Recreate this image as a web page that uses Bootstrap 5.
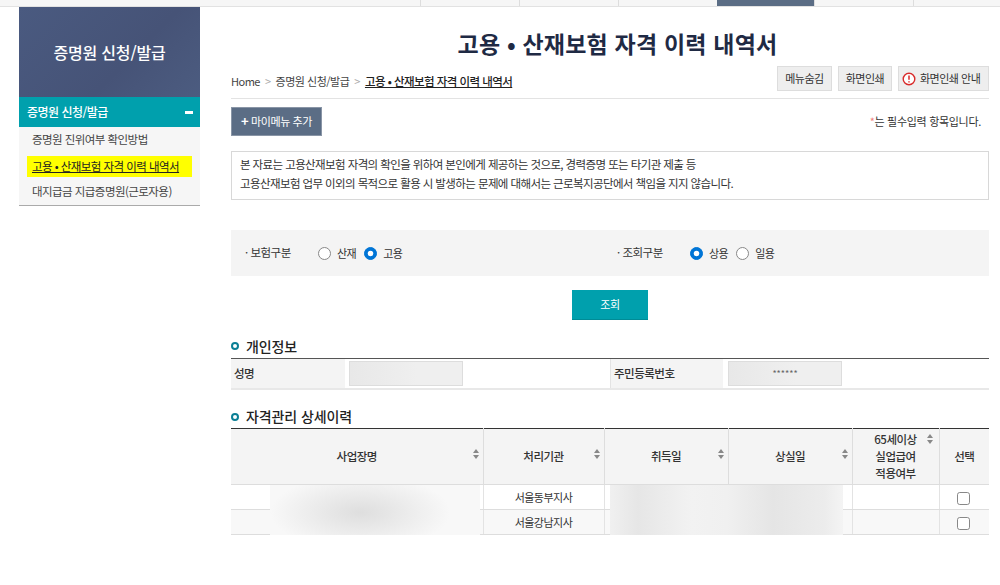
<!doctype html>
<html lang="ko"><head><meta charset="utf-8">
<link href="https://cdn.jsdelivr.net/npm/bootstrap@5.3.0/dist/css/bootstrap.min.css" rel="stylesheet">
<style>
html,body{height:585px;overflow:hidden;background:#fff}
body{font-family:"Noto Sans CJK KR","Liberation Sans",sans-serif;font-size:11px;color:#333;letter-spacing:-.5px}
.topbar{height:7px;background:#f6f6f6;border-bottom:1px solid #e2e2e2}
.topcell{width:99px;height:6px;border-left:1px solid #ddd}
.topdark{background:#5b6d85;border-left:0;width:97px}
.toplast{width:87px}
.shell{padding-left:19px;padding-right:11px;gap:31px}
.side{width:181px;flex:none}
.sidehead{height:90px;background:linear-gradient(135deg,#4a5a80,#465377 60%,#4c5c80);color:#fff;font-size:16px;font-weight:500;letter-spacing:-.2px}
.sideact{height:30px;background:#00a0ad;color:#fff;font-size:12px;font-weight:500;padding:0 7px 0 8px}
.sideminus{width:8px;height:3px;background:#fff}
.sidelist{background:#f6f6f6;border-bottom:1px solid #aaa;height:79px;padding:0 8px;font-size:11.5px;color:#444;letter-spacing:-.55px}
.sideitem{height:25px;padding-left:5px}
.sideon{background:#ff0;height:21px;margin:4px 0 2px;text-decoration:underline;color:#222}
.maincol{width:758px;flex:none}
.pagetitle{font-size:23px;font-weight:700;color:#1f2a44;height:43px;margin:21px 0 0;padding-left:15px;letter-spacing:.2px;text-align:center;line-height:30px}
.crumbbar{height:28px;border-bottom:1px solid #e3e3e3;padding-bottom:7px;font-size:11px;color:#444}
.crumbtext{margin-bottom:1px}
.crumbbar b{font-weight:500;font-size:11.5px;text-decoration:underline;color:#222;letter-spacing:-.55px}
.crumbsep{color:#aaa;margin:0 5px}
.toolset{gap:6px}
.toolbtn{background:#eee;border:1px solid #ddd;height:25px;font-size:11px;color:#333;padding:0;width:55px;letter-spacing:-.5px;border-radius:0}
.toolbtn:hover{background:#eee}
.toolmid{width:54px}
.toolinfo{width:91px;padding-left:3px;gap:4px}
.addbtn{background:#5b6d85;border:1px solid #8995a6;border-radius:0;color:#fff;height:29px;width:91px;font-size:11px;padding:0;letter-spacing:-.4px}
.addbtn b{font-size:13px;line-height:1}
.reqnote{font-size:11px;color:#333;letter-spacing:-.3px}
.reqmark{color:#f08080}
.notice{border:1px solid #d8d8d8;height:49px;padding:0 8px 3px;margin-top:15px;font-size:11.5px;line-height:19px;color:#333;letter-spacing:-.6px}
.searchpanel{background:#f4f4f4;height:46px;margin-top:30px;padding:0 14px;font-size:11px}
.searchhalf{width:372px}
.searchlabel{width:73px;font-size:11.5px}
.radioitem{gap:6px}
.radioitem .form-check-input{width:13px;height:13px;margin:0;background-color:#fff;border-color:#888}
.radioitem .form-check-input:checked{background-color:#0075d6;border-color:#0075d6}
.gobox{margin-top:14px}
.gobtn{width:76px;height:30px;background:#00a0ad;border:0;border-bottom:1px solid #008b96;border-radius:0;color:#fff;font-size:11px;padding:0;letter-spacing:-.4px}
.sectitle{font-size:14px;font-weight:500;color:#222;gap:7px;letter-spacing:-.1px}
.secfirst{margin-top:14px;height:24px}
.secnext{margin-top:15px;height:23px}
.secdot{width:8px;height:8px;border:2px solid #0b7f95;border-radius:50%;flex:none}
.infogrid{border-top:1px solid #555;border-bottom:2px solid #e8e8e8;height:32px}
.infolabel{background:#f4f4f4;font-size:11.5px;font-weight:500;color:#333;padding:0 3px;height:100%}
.labelone{width:114px}
.labeltwo{width:113px;border-left:1px solid #e3e3e3}
.valuecellone{width:265px;padding-left:4px}
.valuecelltwo{padding-left:5px}
.infovalue{background:linear-gradient(90deg,#e8e8e8,#efefef 60%);border:1px solid #ddd;height:25px;width:114px;font-size:9px;color:#666;letter-spacing:0}
.wrapblur{position:relative}
.histtable{width:758px;table-layout:fixed;margin:0;border-top:1px solid #333;font-size:11px;color:#333}
.histtable th{background:#f4f4f4;border-right:1px solid #ddd;border-bottom:1px solid #ddd;text-align:center;vertical-align:middle;font-size:11.5px;font-weight:500;height:56px;padding:0;position:relative;line-height:17px}
.histtable td{height:25px;padding:0;text-align:center;vertical-align:middle;border-bottom:1px solid #ddd;border-right:1px solid #e3e3e3}
.histtable tr:nth-child(2) td{background:#f8f8f8}
.histtable th:last-child,.histtable td:last-child{border-right:0}
.colname{width:252px}.colorg{width:121px}.coldate{width:124px}.colage{width:87px}.colpick{width:50px}
.sortmark{position:absolute;right:4px;top:20px;width:6px;height:10px}
.sorthigh{top:5px;right:6px}
.chk{width:13px;height:13px;margin:0 2px 0 0;border-color:#888;border-radius:2px;vertical-align:middle}
.blurbox{position:absolute}
.blurone{left:39px;top:57px;width:210px;height:50px;background:radial-gradient(ellipse 90px 38px at 43% 55%,#dedede,#f8f8f8)}
.blurtwo{left:379px;top:57px;width:233px;height:50px;background:linear-gradient(90deg,#f0f0f0,#e6e6e6 12%,#f2f2f2 35%,#f0f0f0 50%,#e5e5e5 70%,#ececec 92%,#f4f4f4)}
</style></head>
<body>
<div class="topbar d-flex"><div class="topcell ms-auto"></div><div class="topcell"></div><div class="topcell"></div><div class="topcell topdark"></div><div class="topcell"></div><div class="topcell toplast"></div></div>
<div class="d-flex shell">
 <aside class="side">
  <div class="sidehead d-flex align-items-center justify-content-center">증명원 신청/발급</div>
  <div class="sideact d-flex align-items-center justify-content-between"><span>증명원 신청/발급</span><span class="sideminus"></span></div>
  <div class="sidelist">
   <div class="sideitem d-flex align-items-center">증명원 진위여부 확인방법</div>
   <div class="sideitem sideon d-flex align-items-center">고용 • 산재보험 자격 이력 내역서</div>
   <div class="sideitem d-flex align-items-center">대지급금 지급증명원(근로자용)</div>
  </div>
 </aside>
 <main class="maincol">
  <h1 class="pagetitle">고용 • 산재보험 자격 이력 내역서</h1>
  <div class="crumbbar d-flex align-items-end justify-content-between">
   <div class="crumbtext">Home<span class="crumbsep">&gt;</span>증명원 신청/발급<span class="crumbsep">&gt;</span><b>고용 • 산재보험 자격 이력 내역서</b></div>
   <div class="d-flex toolset">
    <button class="btn toolbtn">메뉴숨김</button><button class="btn toolbtn toolmid">화면인쇄</button>
    <button class="btn toolbtn toolinfo d-flex align-items-center"><svg width="14" height="14" viewBox="0 0 14 14"><circle cx="7" cy="7" r="5.8" fill="#fff" stroke="#d92b2b" stroke-width="1.4"/><path d="M7 3.5v4.2M7 9.2v1.4" stroke="#d92b2b" stroke-width="1.5"/></svg>화면인쇄 안내</button>
   </div>
  </div>
  <div class="d-flex justify-content-between align-items-center mt-2">
   <button class="btn addbtn"><b>+</b> 마이메뉴 추가</button>
   <div class="reqnote me-2"><span class="reqmark">*</span>는 필수입력 항목입니다.</div>
  </div>
  <div class="notice d-flex align-items-center"><div>본 자료는 고용산재보험 자격의 확인을 위하여 본인에게 제공하는 것으로, 경력증명 또는 타기관 제출 등<br>고용산재보험 업무 이외의 목적으로 활용 시 발생하는 문제에 대해서는 근로복지공단에서 책임을 지지 않습니다.</div></div>
  <div class="searchpanel d-flex align-items-center">
   <div class="searchhalf d-flex align-items-center"><span class="searchlabel">· 보험구분</span>
    <label class="radioitem d-flex align-items-center me-2"><input class="form-check-input" type="radio" name="ins">산재</label>
    <label class="radioitem d-flex align-items-center"><input class="form-check-input" type="radio" name="ins" checked>고용</label></div>
   <div class="d-flex align-items-center"><span class="searchlabel">· 조회구분</span>
    <label class="radioitem d-flex align-items-center me-2"><input class="form-check-input" type="radio" name="kind" checked>상용</label>
    <label class="radioitem d-flex align-items-center"><input class="form-check-input" type="radio" name="kind">일용</label></div>
  </div>
  <div class="text-center gobox"><button class="btn gobtn">조회</button></div>
  <div class="sectitle secfirst d-flex align-items-center"><span class="secdot"></span>개인정보</div>
  <div class="infogrid d-flex align-items-center">
   <div class="infolabel labelone d-flex align-items-center">성명</div>
   <div class="valuecellone d-flex align-items-center"><div class="infovalue"></div></div>
   <div class="infolabel labeltwo d-flex align-items-center">주민등록번호</div>
   <div class="valuecelltwo d-flex align-items-center"><div class="infovalue d-flex align-items-center justify-content-center">******</div></div>
  </div>
  <div class="sectitle secnext d-flex align-items-center"><span class="secdot"></span>자격관리 상세이력</div>
  <div class="wrapblur">
  <table class="table histtable">
   <colgroup><col class="colname"><col class="colorg"><col class="coldate"><col class="coldate"><col class="colage"><col class="colpick"></colgroup>
   <thead><tr>
    <th>사업장명<svg class="sortmark" viewBox="0 0 6 10"><path d="M3 0l3 4H0zM3 10l3-4H0z" fill="#888"/></svg></th>
    <th>처리기관<svg class="sortmark" viewBox="0 0 6 10"><path d="M3 0l3 4H0zM3 10l3-4H0z" fill="#888"/></svg></th>
    <th>취득일<svg class="sortmark" viewBox="0 0 6 10"><path d="M3 0l3 4H0zM3 10l3-4H0z" fill="#888"/></svg></th>
    <th>상실일<svg class="sortmark" viewBox="0 0 6 10"><path d="M3 0l3 4H0zM3 10l3-4H0z" fill="#888"/></svg></th>
    <th>65세이상<br>실업급여<br>적용여부<svg class="sortmark sorthigh" viewBox="0 0 6 10"><path d="M3 0l3 4H0zM3 10l3-4H0z" fill="#888"/></svg></th>
    <th>선택</th>
   </tr></thead>
   <tbody>
    <tr><td></td><td>서울동부지사</td><td></td><td></td><td></td><td><input class="form-check-input chk" type="checkbox"></td></tr>
    <tr><td></td><td>서울강남지사</td><td></td><td></td><td></td><td><input class="form-check-input chk" type="checkbox"></td></tr>
   </tbody>
  </table>
  <div class="blurbox blurone"></div><div class="blurbox blurtwo"></div>
  </div>
 </main>
</div>
<script src="https://cdn.jsdelivr.net/npm/bootstrap@5.3.0/dist/js/bootstrap.bundle.min.js"></script>
</body></html>
